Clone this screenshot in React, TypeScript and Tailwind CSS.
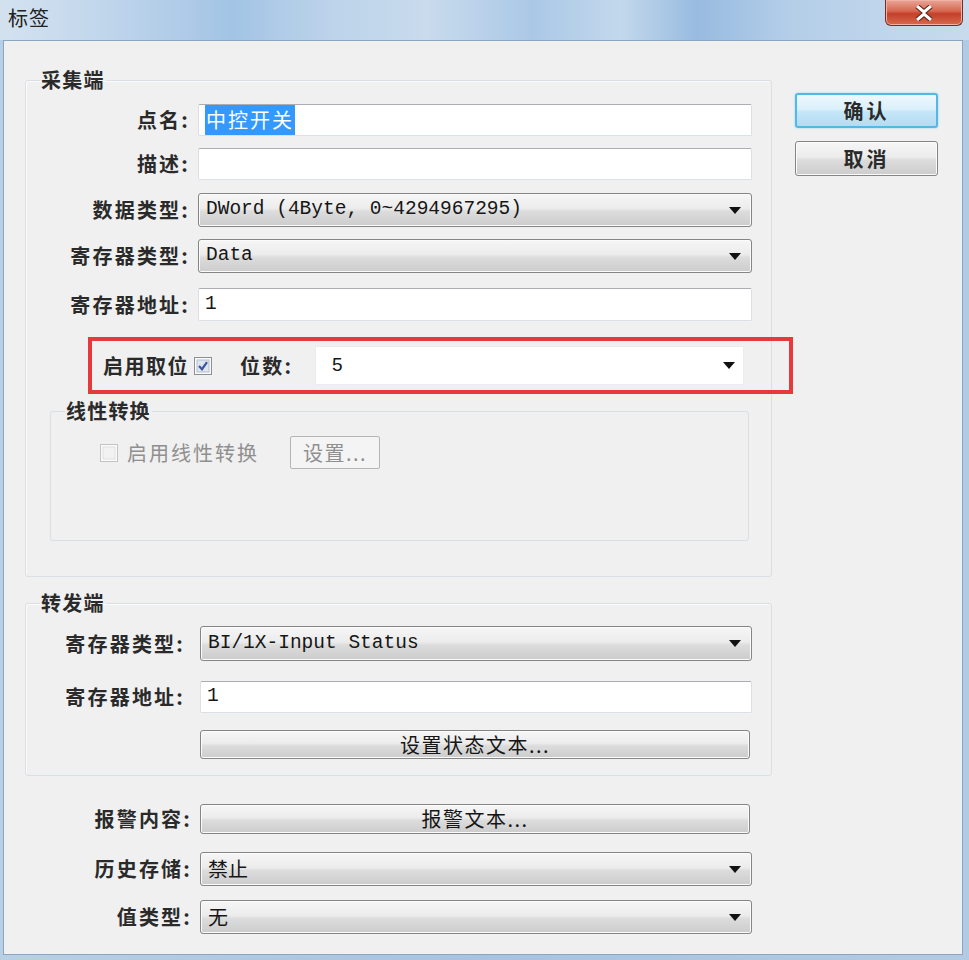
import clsx from 'clsx'

const btnBg =
  'bg-[linear-gradient(#f6f6f6,#ececec_45%,#dcdcdc_55%,#cccccc)] shadow-[inset_0_0_0_1px_#fbfbfb]'

function Arrow() {
  return (
    <svg width="12" height="7" viewBox="0 0 12 7" className="shrink-0">
      <path d="M0 0h12L6 7z" fill="#111" />
    </svg>
  )
}

function Select({ value, mono, className }: { value: string; mono?: boolean; className?: string }) {
  return (
    <div
      className={clsx(
        'flex items-center justify-between rounded-[3px] border border-[#858585] pl-[7px] pr-[10px]',
        btnBg,
        className
      )}
    >
      <span className={clsx(mono && "font-['Liberation_Mono','Noto_Sans_CJK_SC',monospace] text-[19.5px]")}>{value}</span>
      <Arrow />
    </div>
  )
}

function TextBox({ children, className }: { children?: React.ReactNode; className?: string }) {
  return (
    <div
      className={clsx(
        'flex items-center rounded-[2px] border border-[#dbdfe6] border-t-[#abadb3] bg-white pl-[6px]',
        className
      )}
    >
      {children}
    </div>
  )
}

function Button({ label, className }: { label: string; className?: string }) {
  return (
    <div
      className={clsx(
        'flex items-center justify-center rounded-[3px] border border-[#858585] text-[20px]',
        btnBg,
        className
      )}
    >
      {label}
    </div>
  )
}

function Row({
  label,
  labelW,
  gap,
  className,
  children,
}: {
  label: string
  labelW: string
  gap: string
  className?: string
  children: React.ReactNode
}) {
  return (
    <div className={clsx('flex items-center', className)}>
      <span className={clsx('shrink-0 text-right font-bold tracking-[2.2px] text-[#2a2a2a]', labelW)}>{label}</span>
      <div className={clsx('flex h-full', gap)}>{children}</div>
    </div>
  )
}

function CheckBox({ checked, disabled }: { checked?: boolean; disabled?: boolean }) {
  return (
    <svg width="18" height="18" viewBox="0 0 18 18" className="shrink-0">
      <rect x="0.5" y="0.5" width="17" height="17" fill="#fafafa" stroke={disabled ? '#c4c4c4' : '#8e8f8f'} />
      <rect
        x="3"
        y="3"
        width="12"
        height="12"
        fill={disabled ? '#f2f2f2' : '#dde5ee'}
        stroke={disabled ? '#e0e0e0' : '#b3bfcd'}
      />
      {checked && <path d="M5 9l3 3.2 5-7" stroke="#3a55a3" strokeWidth="2.2" fill="none" />}
    </svg>
  )
}

export default function App() {
  return (
    <div className="flex h-[960px] w-[969px] flex-col bg-[linear-gradient(90deg,#b9cfe4,#a7c3df_50%,#b3cbe2)] font-['Noto_Sans_CJK_SC',sans-serif] text-[20px] text-[#161616]">
      {/* title bar */}
      <div className="flex h-[40px] shrink-0 items-start justify-between bg-[linear-gradient(90deg,#d4e2ef_0%,#c2d7ec_10%,#a3c4e5_24%,#bcd3ea_34%,#c9dbed_44%,#aac8e6_55%,#c3d8ec_64%,#98bbe0_72%,#b5cfe9_82%,#c8dbed_100%)]">
        <span className="ml-[8px] mt-[4px] text-[20px] leading-[28px] tracking-[1px] text-[#222]">标签</span>
        <div className="mr-[6px] flex h-[26px] w-[78px] items-center justify-center rounded-b-[6px] border border-t-0 border-[#7b2a22] bg-[linear-gradient(#eaa697,#d6664f_45%,#c43f2a_55%,#d76b4d)] shadow-[inset_0_0_0_1px_#f0b2a4]">
          <svg width="20" height="16" viewBox="0 0 20 16">
            <path d="M3 1l7 6 7-6M3 15l7-6 7 6" stroke="#5a1e16" strokeWidth="5" fill="none" />
            <path d="M3 1l7 6 7-6M3 15l7-6 7 6" stroke="#fff" strokeWidth="3" fill="none" />
          </svg>
        </div>
      </div>

      {/* client area */}
      <div className="mb-[5px] ml-[3px] mr-[6px] flex flex-1 border border-[#8aa6c2] bg-[#f0f0f0] pl-[21px] pt-[27px]">
        <div className="flex w-[747px] flex-col">
          {/* 采集端 */}
          <fieldset className="min-w-0 rounded-[3px] border border-[#d9dfe4] pb-[35px] shadow-[inset_1px_1px_0_#fbfbfb]">
            <legend className="ml-[14px] px-[1px] text-[20px] font-bold leading-[24px] tracking-[1.2px] text-[#2a2a2a]">采集端</legend>
            <Row label="点名:" labelW="w-[164px]" gap="ml-[8px]" className="mt-[12px] h-[32px]">
              <TextBox className="w-[554px] pl-[3px]">
                <span className="bg-[#3399ff] px-[1px] tracking-[2px] text-white">中控开关</span>
              </TextBox>
            </Row>
            <Row label="描述:" labelW="w-[164px]" gap="ml-[8px]" className="mt-[12px] h-[32px]">
              <TextBox className="w-[554px]" />
            </Row>
            <Row label="数据类型:" labelW="w-[164px]" gap="ml-[8px]" className="mt-[13px] h-[34px]">
              <Select value="DWord (4Byte, 0~4294967295)" mono className="w-[554px]" />
            </Row>
            <Row label="寄存器类型:" labelW="w-[164px]" gap="ml-[8px]" className="mt-[12px] h-[34px]">
              <Select value="Data" mono className="w-[554px]" />
            </Row>
            <Row label="寄存器地址:" labelW="w-[164px]" gap="ml-[8px]" className="mt-[15px] h-[33px]">
              <TextBox className="w-[554px]">
                <span className="font-['Liberation_Mono',monospace] text-[19.5px]">1</span>
              </TextBox>
            </Row>

            {/* highlighted bit row */}
            <div className="ml-[62px] mt-[16px] flex h-[57px] w-[705px] items-center border-4 border-[#e6393c] pl-[11px]">
              <span className="font-bold tracking-[1.5px] text-[#2a2a2a]">启用取位</span>
              <span className="ml-[5px] flex">
                <CheckBox checked />
              </span>
              <span className="ml-[28px] font-bold tracking-[2.2px] text-[#2a2a2a]">位数:</span>
              <div className="ml-[22px] flex h-[39px] w-[429px] items-center justify-between border border-[#ececec] bg-white pl-[16px] pr-[8px]">
                <span className="font-['Liberation_Sans',sans-serif] text-[19px]">5</span>
                <Arrow />
              </div>
            </div>

            {/* 线性转换 */}
            <fieldset className="ml-[24px] mt-[5px] h-[142px] w-[699px] min-w-0 rounded-[3px] border border-[#d9dfe4]">
              <legend className="ml-[14px] px-[1px] text-[20px] font-bold leading-[24px] tracking-[1.2px] text-[#2a2a2a]">线性转换</legend>
              <div className="ml-[49px] mt-[13px] flex h-[33px] items-center">
                <CheckBox disabled />
                <span className="ml-[9px] tracking-[2px] text-[#8f8f8f]">启用线性转换</span>
                <div className="ml-[31px] flex h-[33px] w-[90px] items-center justify-center rounded-[2px] border border-[#b5b5b5] bg-[#f4f4f4] tracking-[1.5px] text-[#8f8f8f]">
                  设置...
                </div>
              </div>
            </fieldset>
          </fieldset>

          {/* 转发端 */}
          <fieldset className="mt-[14px] min-w-0 rounded-[3px] border border-[#d9dfe4] pb-[16px] shadow-[inset_1px_1px_0_#fbfbfb]">
            <legend className="ml-[14px] px-[1px] text-[20px] font-bold leading-[24px] tracking-[1.2px] text-[#2a2a2a]">转发端</legend>
            <Row label="寄存器类型:" labelW="w-[159px]" gap="ml-[15px]" className="mt-[11px] h-[35px]">
              <Select value="BI/1X-Input Status" mono className="w-[552px]" />
            </Row>
            <Row label="寄存器地址:" labelW="w-[159px]" gap="ml-[15px]" className="mt-[20px] h-[32px]">
              <TextBox className="w-[552px]">
                <span className="font-['Liberation_Mono',monospace] text-[19.5px]">1</span>
              </TextBox>
            </Row>
            <div className="ml-[174px] mt-[17px] flex h-[29px]">
              <Button label="设置状态文本..." className="w-[550px] tracking-[1.5px]" />
            </div>
          </fieldset>

          <Row label="报警内容:" labelW="w-[167px]" gap="ml-[8px]" className="mt-[28px] h-[30px]">
            <Button label="报警文本..." className="w-[550px] tracking-[1.5px]" />
          </Row>
          <Row label="历史存储:" labelW="w-[167px]" gap="ml-[8px]" className="mt-[18px] h-[34px]">
            <Select value="禁止" className="w-[552px] pl-[4px]" />
          </Row>
          <Row label="值类型:" labelW="w-[167px]" gap="ml-[8px]" className="mt-[14px] h-[34px]">
            <Select value="无" className="w-[552px] pl-[4px]" />
          </Row>
        </div>

        {/* right buttons */}
        <div className="ml-[23px] mt-[25px] flex w-[143px] flex-col">
          <div className="flex h-[35px] items-center justify-center rounded-[3px] border-2 border-[#53b8e4] bg-[linear-gradient(#eef8fd,#dbf0fb_45%,#c4e6f8_55%,#b4dcf2)] font-bold tracking-[3px] text-[#2a2a2a] shadow-[0_0_2px_#7fd0f0]">
            确认
          </div>
          <Button label="取消" className="mt-[13px] h-[35px] font-bold tracking-[3px] text-[#2a2a2a]" />
        </div>
      </div>
    </div>
  )
}
